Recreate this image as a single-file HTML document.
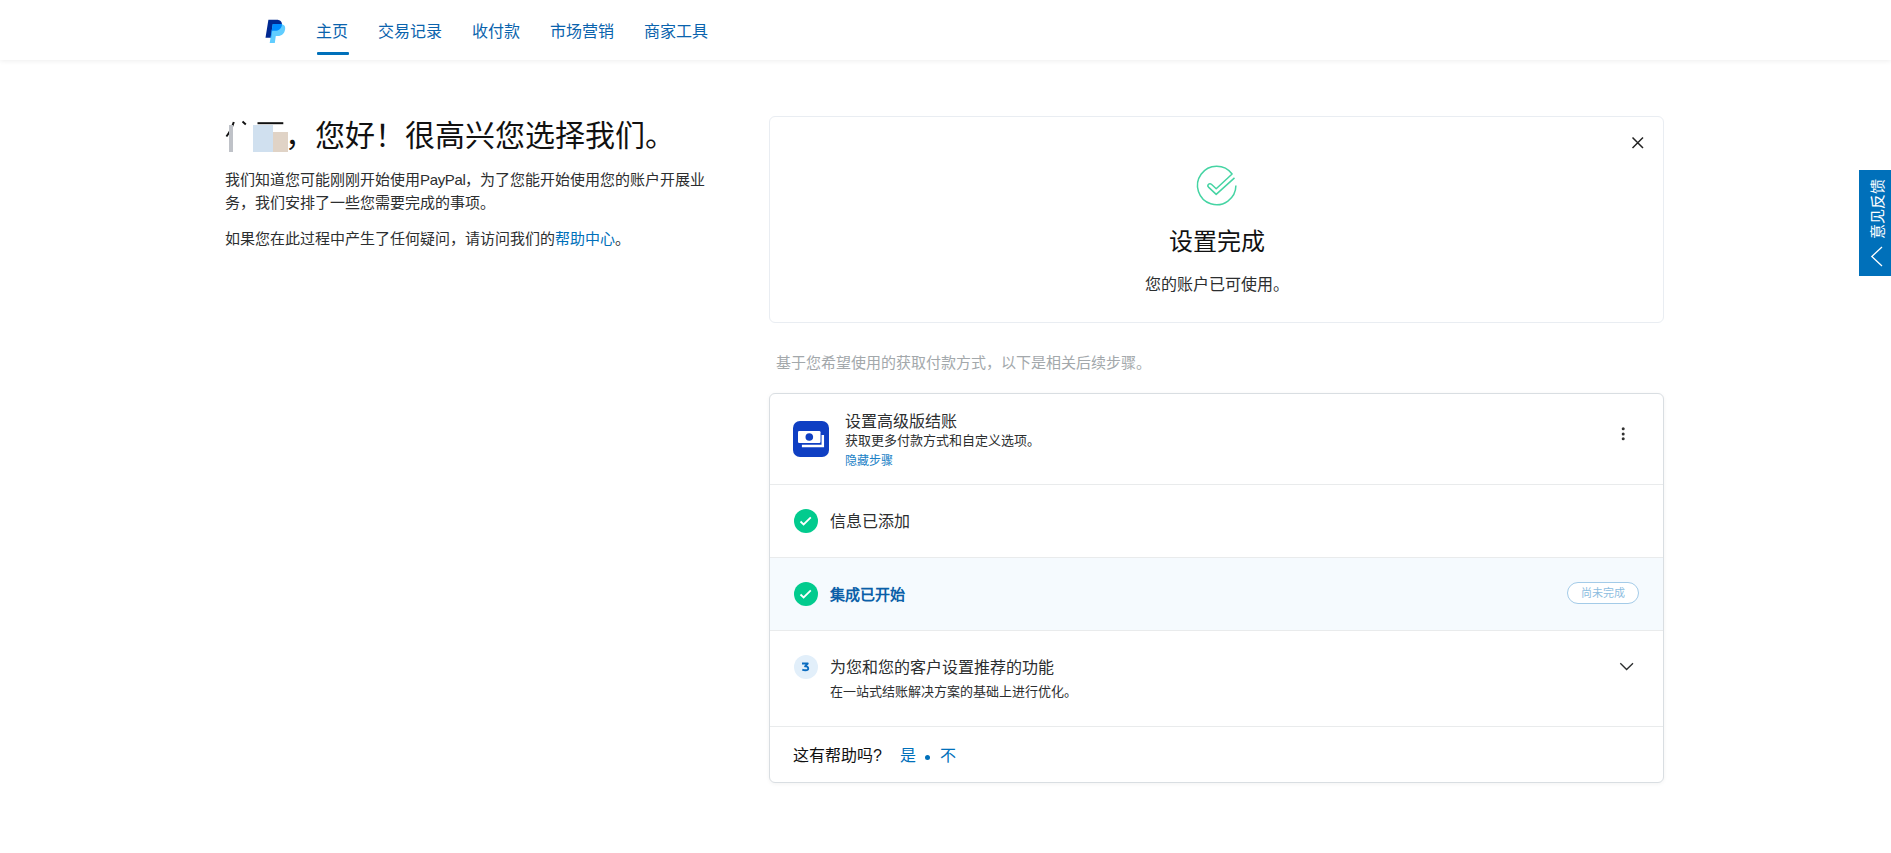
<!DOCTYPE html>
<html lang="zh-CN">
<head>
<meta charset="utf-8">
<style>
*{margin:0;padding:0;box-sizing:border-box}
html,body{width:1891px;height:853px;overflow:hidden;background:#fff}
body{font-family:"Liberation Sans",sans-serif;color:#2c2e2f;position:relative}
.a{position:absolute;white-space:nowrap;line-height:1}
#hdr{position:absolute;left:0;top:0;width:1891px;height:60px;background:#fff;box-shadow:0 1px 5px rgba(0,0,0,0.07)}
.nav{font-size:16px;color:#0a63ad}
.ul{position:absolute;left:317px;top:52px;width:32px;height:3px;background:#0070ba;border-radius:1px}
.card1{position:absolute;left:769px;top:116px;width:895px;height:207px;border:1px solid #e9edf2;border-radius:6px}
.card2{position:absolute;left:769px;top:393px;width:895px;height:390px;border:1px solid #d9dee2;border-radius:6px;box-shadow:0 1px 4px rgba(0,0,0,0.05);overflow:hidden;background:#fff}
.div{position:absolute;left:0;width:100%;height:1px;background:#e9ebec}
.chk{position:absolute;width:24px;height:24px;border-radius:50%;background:#02cb8e}
.fb{position:absolute;left:1859px;top:170px;width:32px;height:106px;background:#0070ba}
</style>
</head>
<body>
<div id="hdr">
  <svg class="a" style="left:265px;top:19px" width="22" height="25" viewBox="0 0 22 25">
    <defs><clipPath id="dk"><path d="M0.5 18.7 L3.4 0.7 H11.5 C15.3 0.7 17.4 2.9 16.9 6.2 C16.3 9.6 13.8 11.8 10 11.8 H7.2 L6.1 18.7 Z"/></clipPath></defs>
    <path d="M0.5 18.7 L3.4 0.7 H11.5 C15.3 0.7 17.4 2.9 16.9 6.2 C16.3 9.6 13.8 11.8 10 11.8 H7.2 L6.1 18.7 Z" fill="#002991"/>
    <path d="M4.7 23.9 L7.8 4.9 H15.2 C19 4.9 20.7 7.1 20.1 10.5 C19.5 14.3 16.8 17.1 12.8 17.1 H10.8 L9.8 23.9 Z" fill="#60cdff"/>
    <path clip-path="url(#dk)" d="M4.7 23.9 L7.8 4.9 H15.2 C19 4.9 20.7 7.1 20.1 10.5 C19.5 14.3 16.8 17.1 12.8 17.1 H10.8 L9.8 23.9 Z" fill="#008cff"/>
  </svg>
  <div class="a nav" style="left:316px;top:24px">主页</div>
  <div class="a nav" style="left:378px;top:24px">交易记录</div>
  <div class="a nav" style="left:472px;top:24px">收付款</div>
  <div class="a nav" style="left:550px;top:24px">市场营销</div>
  <div class="a nav" style="left:644px;top:24px">商家工具</div>
  <div class="ul"></div>
</div>

<!-- left column -->
<svg class="a" style="left:220px;top:115px" width="70" height="40" viewBox="0 0 70 40">
  <path d="M13.8 7 C12.5 11 10 17 6.4 21.5" stroke="#111" stroke-width="2" fill="none"/>
  <path d="M22.5 6.6 L25.8 9.4" stroke="#111" stroke-width="2" fill="none"/>
  <path d="M37.5 8.2 H63.3" stroke="#111" stroke-width="2" fill="none"/>
</svg>
<div class="a" style="left:229px;top:125px;width:4px;height:27px;background:#bfc2c8"></div>
<div class="a" style="left:253px;top:125px;width:20px;height:27px;background:#d0e0ef"></div>
<div class="a" style="left:273px;top:132px;width:15px;height:20px;background:#e0d3c6"></div>
<div class="a" style="left:285px;top:121px;font-size:30px;color:#111">，您好！很高兴您选择我们。</div>
<div class="a" style="left:225px;top:168px;font-size:15px;line-height:23px;color:#2c2e2f">我们知道您可能刚刚开始使用<span style="letter-spacing:-0.35px">PayPal</span>，为了您能开始使用您的账户开展业<br>务，我们安排了一些您需要完成的事项。</div>
<div class="a" style="left:225px;top:231px;font-size:15px;color:#2c2e2f">如果您在此过程中产生了任何疑问，请访问我们的<span style="color:#0070ba">帮助中心</span>。</div>

<!-- card 1 -->
<div class="card1"></div>
<svg class="a" style="left:1630px;top:135px" width="16" height="16" viewBox="0 0 16 16"><path d="M2.5 2.5 L13 13 M13 2.5 L2.5 13" stroke="#222" stroke-width="1.5" fill="none"/></svg>
<svg class="a" style="left:1190px;top:160px" width="56" height="56" viewBox="0 0 56 56">
  <path d="M45.9 25.6 A19.2 19.2 0 1 1 42.1 14.0 L26.2 28.8 L21.4 24.3 A2 2 0 0 0 18.5 27.1 L26.2 34.4 L44.5 17.9" stroke="#45d4a3" stroke-width="1.5" fill="none" stroke-linejoin="round"/>
</svg>
<div class="a" style="left:769px;width:895px;text-align:center;top:230px;font-size:24px;color:#111">设置完成</div>
<div class="a" style="left:769px;width:895px;text-align:center;top:277px;font-size:16px;color:#2c2e2f">您的账户已可使用。</div>

<div class="a" style="left:776px;top:355px;font-size:15px;color:#a3a8ab">基于您希望使用的获取付款方式，以下是相关后续步骤。</div>

<!-- card 2 -->
<div class="card2">
  <div class="div" style="top:90px"></div>
  <div class="a" style="left:0;top:164px;width:100%;height:72px;background:#f5fafe"></div>
  <div class="div" style="top:163px"></div>
  <div class="div" style="top:236px"></div>
  <div class="div" style="top:332px"></div>
</div>
<svg class="a" style="left:793px;top:421px" width="36" height="36" viewBox="0 0 36 36">
  <rect x="0" y="0" width="36" height="36" rx="7" fill="#0f3fc3"/>
  <rect x="5" y="10.1" width="22.5" height="11.95" rx="1.2" fill="#fff"/>
  <circle cx="16.3" cy="16" r="3.8" fill="#0f3fc3"/>
  <path d="M29.8 14 V25.05 H8.9" stroke="#fff" stroke-width="2.5" fill="none"/>
</svg>
<div class="a" style="left:845px;top:414px;font-size:16px;color:#2c2e2f">设置高级版结账</div>
<div class="a" style="left:845px;top:434px;font-size:13px;color:#2c2e2f">获取更多付款方式和自定义选项。</div>
<div class="a" style="left:845px;top:455px;font-size:12px;color:#1a7fc6">隐藏步骤</div>
<svg class="a" style="left:1618px;top:424px" width="10" height="20" viewBox="0 0 10 20"><circle cx="5.2" cy="4.8" r="1.5" fill="#333"/><circle cx="5.2" cy="9.9" r="1.5" fill="#333"/><circle cx="5.2" cy="14.8" r="1.5" fill="#333"/></svg>

<div class="chk" style="left:794px;top:509px"><svg width="24" height="24" viewBox="0 0 24 24"><path d="M6.5 12.5 L9.6 15.5 L16.8 8.4" stroke="#fff" stroke-width="1.8" fill="none"/></svg></div>
<div class="a" style="left:830px;top:514px;font-size:16px;color:#2c2e2f">信息已添加</div>

<div class="chk" style="left:794px;top:582px"><svg width="24" height="24" viewBox="0 0 24 24"><path d="M6.5 12.5 L9.6 15.5 L16.8 8.4" stroke="#fff" stroke-width="1.8" fill="none"/></svg></div>
<div class="a" style="left:830px;top:587px;font-size:15px;font-weight:bold;color:#0a5fa8">集成已开始</div>
<div class="a" style="left:1567px;top:582px;width:72px;height:22px;border:1px solid #a3cbe8;border-radius:11px;background:#fff;font-size:11px;line-height:21px;text-align:center;color:#8dbde0">尚未完成</div>

<svg class="a" style="left:794px;top:655px" width="24" height="24" viewBox="0 0 24 24"><circle cx="12" cy="12" r="12" fill="#e2effa"/><path d="M8 8.5 H13.8 L11 11.4 H11.4 C13.1 11.4 14.25 12.1 14.25 13.4 C14.25 14.7 13.1 15.25 11.4 15.25 C10.2 15.25 9.2 15 8.3 14.6" stroke="#0b6cc0" stroke-width="1.8" fill="none" stroke-linejoin="round"/></svg>
<div class="a" style="left:830px;top:660px;font-size:16px;color:#2c2e2f">为您和您的客户设置推荐的功能</div>
<div class="a" style="left:830px;top:685px;font-size:13px;color:#2c2e2f">在一站式结账解决方案的基础上进行优化。</div>
<svg class="a" style="left:1617px;top:659px" width="20" height="14" viewBox="0 0 20 14"><path d="M3.3 4.3 L9.6 10.5 L16 4.3" stroke="#2c2e2f" stroke-width="1.35" fill="none"/></svg>

<div class="a" style="left:793px;top:748px;font-size:16px;color:#111">这有帮助吗?</div>
<div class="a" style="left:900px;top:748px;font-size:16px;color:#0070ba">是</div>
<div class="a" style="left:925px;top:755px;width:5px;height:5px;border-radius:50%;background:#0070ba"></div>
<div class="a" style="left:940px;top:748px;font-size:16px;color:#0070ba">不</div>

<!-- feedback tab -->
<div class="fb">
  <div class="a" style="left:11px;top:69px;transform:rotate(-90deg);transform-origin:0 0;font-size:15px;color:#fff">意见反馈</div>
  <svg class="a" style="left:10px;top:75px" width="16" height="22" viewBox="0 0 16 22"><path d="M13 2 L2.8 11.5 L13 21" stroke="#fff" stroke-width="1.3" fill="none"/></svg>
</div>
</body>
</html>
